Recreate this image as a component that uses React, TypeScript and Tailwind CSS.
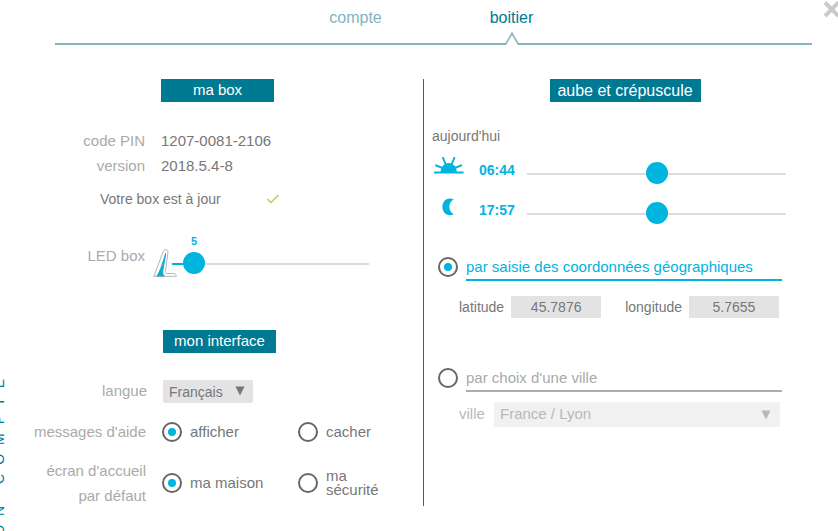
import { useState } from 'react';
import type { ReactNode } from 'react';

interface SliderProps {
  label: string;
  min?: number;
  max: number;
  initial: number;
  filled?: boolean;
}

interface RadioProps {
  name: string;
  value: string;
  current: string;
  onSelect: (value: string) => void;
  children: ReactNode;
}

const THUMB = 22;

function Badge({ children }: { children: ReactNode }) {
  return (
    <h2 className="flex h-[23px] w-[113px] items-center justify-center bg-[#007993] text-[15px] text-white">{children}</h2>
  );
}

function Slider({ label, min = 0, max, initial, filled }: SliderProps) {
  const [value, setValue] = useState(initial);
  const ratio = (value - min) / (max - min);
  // centre of the thumb along the track
  const position = `calc(${THUMB / 2}px + (100% - ${THUMB}px) * ${ratio})`;

  return (
    <div className="relative flex h-[22px] min-w-0 flex-1 items-center">
      <div className="absolute inset-x-0 top-[11px] h-0.5 bg-[#dcdcdc]">
        {filled && <div className="h-full bg-[#00b4e0]" style={{ width: position }} />}
      </div>
      {filled && (
        <output className="absolute -top-[18px] -translate-x-1/2 text-[11px] leading-[14px] font-bold text-[#00b4e0]" style={{ left: position }}>
          {value}
        </output>
      )}
      <input
        type="range"
        aria-label={label}
        min={min}
        max={max}
        value={value}
        onChange={e => setValue(Number(e.target.value))}
        className="relative h-[22px] w-full cursor-pointer appearance-none bg-transparent [&::-webkit-slider-thumb]:size-[22px] [&::-webkit-slider-thumb]:appearance-none [&::-webkit-slider-thumb]:rounded-full [&::-webkit-slider-thumb]:bg-[#00b4e0]"
      />
    </div>
  );
}

function Radio({ name, value, current, onSelect, children }: RadioProps) {
  return (
    <label className="flex items-center gap-2 leading-5">
      <input
        type="radio"
        name={name}
        value={value}
        checked={current === value}
        onChange={() => onSelect(value)}
        className="grid size-5 shrink-0 appearance-none place-content-center rounded-full border-2 border-[#6b6666] before:size-2 before:rounded-full checked:before:bg-[#00b4e0]"
      />
      {children}
    </label>
  );
}

function Arrow({ className }: { className: string }) {
  return (
    <svg viewBox="0 0 10 10" className={className} aria-hidden="true">
      <path d="M0.5 0.5h9L5 9.5z" fill="currentColor" />
    </svg>
  );
}

function LedIcon() {
  return (
    <svg width="24" height="28" viewBox="0 0 24 28" fill="none" aria-hidden="true">
      <path d="M0.8 27.3 10.2 2.6C10.9 0.9 12 0.6 13 0.7c1.6 0.2 2.2 1.4 1.9 3.2L12.4 22.6c-0.2 1.4 0.3 1.9 1.5 1.9h7c1.6 0 2.4 1 2.4 2.8z" fill="white" stroke="#b5b5b5" />
      <path d="M3.800 27C6 25 10 14 12.600 4.500 12 12 9.500 20 9.800 24c.1 1.500.7 2.300 1.500 3z" fill="#14aad0" stroke="#14aad0" />
    </svg>
  );
}

function SunIcon() {
  return (
    <svg width="30" height="26" viewBox="0 0 30 26" className="shrink-0 self-start" aria-hidden="true">
      <path d="M6.500 19.500C7 13.500 10.300 10 14.700 10s7.700 3.500 8.200 9.500z" fill="#00b4e0" />
      <path d="M0.800 19.500h28M2 12.300l6.500 2.700M9 4.800l2.700 6.500M20.300 4.800l-2.700 6.500M27.300 12.300l-6.500 2.700" stroke="#00b4e0" strokeWidth="1.900" strokeLinecap="round" />
    </svg>
  );
}

function MoonIcon() {
  return (
    <svg width="30" height="26" viewBox="0 0 30 26" className="shrink-0 self-start" aria-hidden="true">
      <path d="M19.800 6.200C12 3.500 8.300 9 8.400 14c.2 6.500 5.700 10 11.500 7.200-6-2.700-6-12 -.1-15z" fill="#00b4e0" />
    </svg>
  );
}

export default function App() {
  const [help, setHelp] = useState('afficher');
  const [home, setHome] = useState('maison');
  const [place, setPlace] = useState('coords');
  const [latitude, setLatitude] = useState('45.7876');
  const [longitude, setLongitude] = useState('5.7655');

  return (
    <div className="relative flex min-h-screen overflow-hidden bg-white font-['Liberation_Sans',Arial,sans-serif] text-[15px] text-[#777]">
      <aside className="flex h-screen w-2 shrink-0 justify-end overflow-hidden pt-[370px] pr-0.5">
        <p className="h-max rotate-180 text-[14px] leading-[14px] tracking-[9px] whitespace-nowrap text-[#007993] [writing-mode:vertical-rl]">MON COMPTE</p>
      </aside>

      <main className="min-w-0 flex-1">
        <nav className="mr-[26px] ml-[47px] flex h-[45px] justify-center border-b-2 border-[#85b5b9] text-base">
          <a href="#compte" className="w-[156px] pt-1.5 text-center text-[#7fb4c3]">compte</a>
          <a href="#boitier" aria-current="page" className="relative w-[156px] pt-1.5 text-center text-[#007993]">
            boitier
            <svg width="14" height="13" viewBox="0 0 14 13" className="absolute -bottom-0.5 left-1/2 -translate-x-1/2" aria-hidden="true">
              <path d="M0 13 7 1l7 12z" fill="white" />
              <path d="M0 12.300h.6L7 1.300l6.400 11h.6" fill="none" stroke="#85b5b9" strokeWidth="1.600" />
            </svg>
          </a>
        </nav>

        <div className="mt-[34px] grid grid-cols-2">
          <div>
            <section>
              <div className="ml-[153px]"><Badge>ma box</Badge></div>
              <dl className="mt-[26px] grid grid-cols-[137px_1fr] gap-x-4 leading-[25px]">
                <dt className="text-right text-[#aaa]">code PIN</dt>
                <dd>1207-0081-2106</dd>
                <dt className="text-right text-[#aaa]">version</dt>
                <dd>2018.5.4-8</dd>
              </dl>
              <p className="mt-[11px] ml-[92px] flex w-[180px] items-center justify-between text-sm">
                Votre box est à jour
                <svg width="14" height="10" viewBox="0 0 14 10" fill="none" aria-hidden="true">
                  <path d="M1.500 5 5 8.500 12.500 1" stroke="#b5d045" strokeWidth="1.400" />
                </svg>
              </p>
              <div className="mt-10 mr-[54px] flex h-7 items-center">
                <span className="w-[137px] shrink-0 self-start text-right leading-[14px] text-[#aaa]">LED box</span>
                <span className="-mr-[5px] ml-2 shrink-0"><LedIcon /></span>
                <Slider label="LED box" max={80} initial={5} filled />
              </div>
            </section>

            <section className="mt-[53px]">
              <div className="ml-[155px]"><Badge>mon interface</Badge></div>
              <div className="mt-[27px] grid grid-cols-[139px_1fr] items-center gap-x-4">
                <label htmlFor="langue" className="text-right text-[#aaa]">langue</label>
                <div className="relative h-[23px] w-[90px]">
                  <select id="langue" className="h-full w-full appearance-none rounded-xs bg-[#e3e3e3] pl-1.5 text-sm text-[#777]">
                    <option>Français</option>
                    <option>English</option>
                  </select>
                  <Arrow className="pointer-events-none absolute top-1.5 right-2 size-2.5" />
                </div>
              </div>
              <div role="radiogroup" aria-labelledby="aide" className="mt-[19px] grid grid-cols-[138px_1fr] items-center gap-x-4">
                <span id="aide" className="text-right leading-5 text-[#aaa]">messages d'aide</span>
                <div className="grid grid-cols-[136px_1fr]">
                  <Radio name="aide" value="afficher" current={help} onSelect={setHelp}>afficher</Radio>
                  <Radio name="aide" value="cacher" current={help} onSelect={setHelp}>cacher</Radio>
                </div>
              </div>
              <div role="radiogroup" aria-labelledby="accueil" className="mt-4 grid grid-cols-[138px_1fr] items-center gap-x-4">
                <span id="accueil" className="text-right leading-[25px] text-[#aaa]">écran d'accueil<br />par défaut</span>
                <div className="grid grid-cols-[136px_1fr]">
                  <Radio name="accueil" value="maison" current={home} onSelect={setHome}>ma maison</Radio>
                  <Radio name="accueil" value="securite" current={home} onSelect={setHome}>
                    <span className="w-[60px] leading-[14px]">ma sécurité</span>
                  </Radio>
                </div>
              </div>
            </section>
          </div>

          <section className="mb-0.5 border-l border-[#007993] pr-[52px] pl-2">
            <div className="flex justify-center pl-8">
              <h2 className="flex h-[23px] w-[151px] items-center justify-center bg-[#007993] text-base whitespace-nowrap text-white">aube et crépuscule</h2>
            </div>
            <p className="mt-6 text-sm">aujourd'hui</p>
            <div className="mt-[7px] ml-0.5 flex h-10 items-center">
              <SunIcon />
              <time className="ml-[15px] w-12 pb-1.5 text-sm font-bold text-[#00b4e0]">06:44</time>
              <Slider label="aube" min={-60} max={60} initial={0} />
            </div>
            <div className="ml-0.5 flex h-10 items-center">
              <MoonIcon />
              <time className="ml-[15px] w-12 pb-1.5 text-sm font-bold text-[#00b4e0]">17:57</time>
              <Slider label="crépuscule" min={-60} max={60} initial={0} />
            </div>

            <div className="mt-6 mr-1 ml-1.5 [&>label]:items-start">
              <Radio name="lieu" value="coords" current={place} onSelect={setPlace}>
                <span className="flex-1 border-b-2 border-[#00b4e0] pb-0.5 whitespace-nowrap text-[#00b4e0]">par saisie des coordonnées géographiques</span>
              </Radio>
            </div>
            <div className="mt-[15px] ml-[27px] flex items-center text-sm">
              <label htmlFor="latitude">latitude</label>
              <input id="latitude" value={latitude} onChange={e => setLatitude(e.target.value)} className="ml-[7px] h-[22px] w-[90px] bg-[#e3e3e3] text-center" />
              <label htmlFor="longitude" className="ml-6">longitude</label>
              <input id="longitude" value={longitude} onChange={e => setLongitude(e.target.value)} className="ml-[7px] h-[22px] w-[90px] bg-[#e3e3e3] text-center" />
            </div>

            <div className="mt-[50px] mr-1 ml-1.5 [&>label]:items-start">
              <Radio name="lieu" value="ville" current={place} onSelect={setPlace}>
                <span className="flex-1 border-b-2 border-[#adadad] pb-0.5 text-[#aaa]">par choix d'une ville</span>
              </Radio>
            </div>
            <div className="mt-2.5 mr-1.5 ml-[27px] flex items-center text-[#b8b8b8]">
              <label htmlFor="ville" className="w-[35px]">ville</label>
              <div className="relative h-[25px] flex-1">
                <select id="ville" disabled={place !== 'ville'} className="h-full w-full appearance-none bg-[#f1f1f1] pl-1.5 text-[#b8b8b8] opacity-100">
                  <option>France / Lyon</option>
                </select>
                <Arrow className="pointer-events-none absolute top-2 right-[9px] size-2.5" />
              </div>
            </div>
          </section>
        </div>
      </main>

      <button type="button" aria-label="fermer" className="absolute top-0 -right-0.5 text-[#cbcbcb]">
        <svg width="17" height="18" viewBox="0 0 17 18" aria-hidden="true">
          <path d="M2 2.500l13.500 13.500M15.500 2.500L2 16" stroke="currentColor" strokeWidth="4" />
        </svg>
      </button>
    </div>
  );
}
